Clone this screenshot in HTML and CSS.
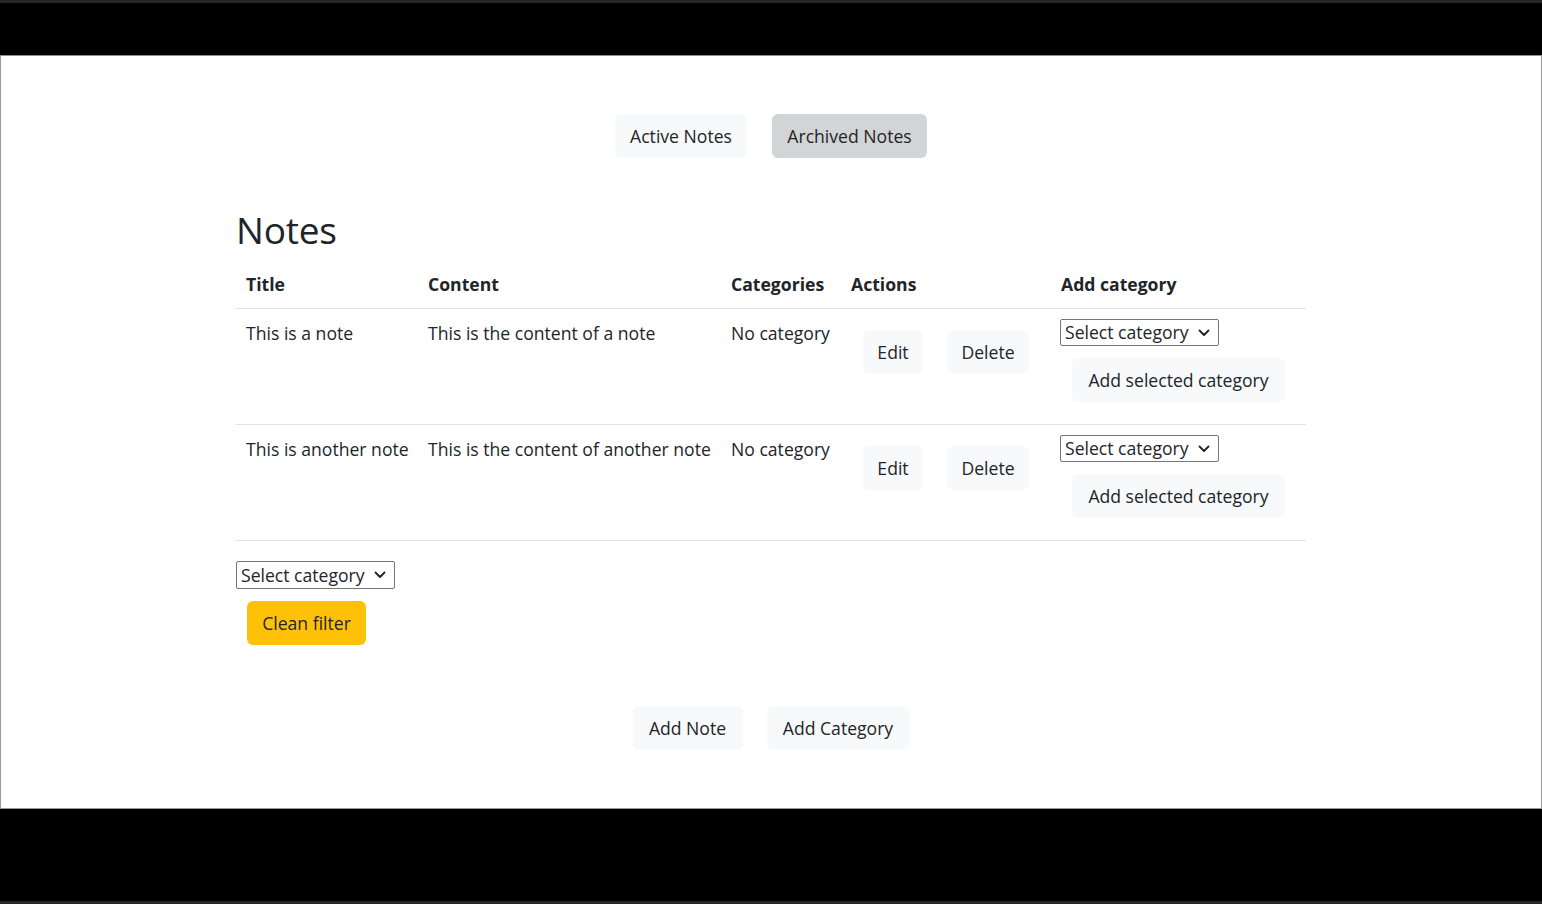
FILE: index.html
```html
<!DOCTYPE html>
<html lang="en">
<head>
<meta charset="utf-8">
<title>Notes</title>
<link rel="stylesheet" href="styles.css">
</head>
<body>
<div class="strip"></div>
<div class="bar-top"></div>
<div class="frame">
  <nav class="tabs">
    <button class="btn btn-light">Active Notes</button>
    <button class="btn btn-pressed">Archived Notes</button>
  </nav>
  <main class="container">
    <h2 class="title">Notes</h2>
    <table class="notes">
      <colgroup>
        <col class="c-title"><col class="c-content"><col class="c-cat"><col class="c-actions"><col class="c-add">
      </colgroup>
      <thead>
        <tr><th>Title</th><th>Content</th><th>Categories</th><th>Actions</th><th>Add category</th></tr>
      </thead>
      <tbody>
        <tr>
          <td>This is a note</td>
          <td>This is the content of a note</td>
          <td>No category</td>
          <td class="actions"><button class="btn btn-light btn-edit">Edit</button><button class="btn btn-light btn-del">Delete</button></td>
          <td class="add">
            <div class="select"><span>Select category</span><svg class="chev" viewBox="0 0 12 8" width="12" height="8"><path d="M1.5 1.5 6 6l4.5-4.5" fill="none" stroke="#222" stroke-width="1.8" stroke-linecap="round" stroke-linejoin="round"/></svg></div>
            <button class="btn btn-light btn-addsel">Add selected category</button>
          </td>
        </tr>
        <tr>
          <td>This is another note</td>
          <td>This is the content of another note</td>
          <td>No category</td>
          <td class="actions"><button class="btn btn-light btn-edit">Edit</button><button class="btn btn-light btn-del">Delete</button></td>
          <td class="add">
            <div class="select"><span>Select category</span><svg class="chev" viewBox="0 0 12 8" width="12" height="8"><path d="M1.5 1.5 6 6l4.5-4.5" fill="none" stroke="#222" stroke-width="1.8" stroke-linecap="round" stroke-linejoin="round"/></svg></div>
            <button class="btn btn-light btn-addsel">Add selected category</button>
          </td>
        </tr>
      </tbody>
    </table>
    <div class="filter">
      <div class="select select-lg"><span>Select category</span><svg class="chev" viewBox="0 0 12 8" width="12" height="8"><path d="M1.5 1.5 6 6l4.5-4.5" fill="none" stroke="#222" stroke-width="1.8" stroke-linecap="round" stroke-linejoin="round"/></svg></div>
      <button class="btn btn-warning">Clean filter</button>
    </div>
    <div class="bottom">
      <button class="btn btn-light">Add Note</button>
      <button class="btn btn-light">Add Category</button>
    </div>
  </main>
</div>
<div class="bar-bottom"></div>
<div class="strip"></div>
</body>
</html>
```
FILE: styles.css
```css
* { box-sizing: border-box; }
html, body { margin: 0; padding: 0; }
body {
  background: #000;
  font-family: "Open Sans", "Noto Sans", sans-serif;
  font-size: 17.6px;
  color: #212529;
  height: 904px;
  overflow: hidden;
}
.strip { height: 3px; background: #262626; }
.bar-top { height: 52px; }
.bar-bottom { height: 92px; }
.frame {
  height: 754px;
  background: #fff;
  border: 1px solid #9a9a9a;
  border-top-color: #8c8c8c;
  padding-top: 58px;
  overflow: hidden;
}
.btn {
  font: inherit;
  color: #212529;
  border: 0;
  border-radius: 6px;
  height: 44px;
  padding: 0 12px;
  line-height: 44px;
  cursor: pointer;
  white-space: nowrap;
}
.btn-light { background: #f8f9fa; }
.btn-pressed { background: #d3d4d5; }
.btn-warning { background: #ffc107; }
.tabs {
  display: flex;
  justify-content: center;
  gap: 25px;
}
.tabs .btn:first-child { width: 132px; }
.tabs .btn:last-child { width: 155px; }
.container {
  width: 1070px;
  margin: 0 auto;
}
.title {
  font-size: 37px;
  font-weight: 500;
  margin: 48px 0 0 0;
  line-height: 48px;
  letter-spacing: -0.2px;
}
.notes {
  width: 1070px;
  border-collapse: collapse;
  table-layout: fixed;
  margin-top: 6px;
}
.c-title { width: 182px; }
.c-content { width: 303px; }
.c-cat { width: 120px; }
.c-actions { width: 210px; }
.c-add { width: 255px; }
.notes th, .notes td {
  text-align: left;
  vertical-align: top;
  padding: 10px 9px 10px 10px;
  line-height: 28px;
  white-space: nowrap;
  overflow: visible;
}
.notes th { font-weight: 700; border-bottom: 1px solid #dee2e6; }
.notes td { border-bottom: 1px solid #dee2e6; }
.notes tbody tr td { height: 116px; }
.notes td.actions { padding-top: 10px; }
.notes td.add { padding-top: 9px; padding-left: 9px; }
.actions .btn { margin: 11px 12px 0; }
.btn-edit { width: 60px; }
.btn-del { width: 82px; }
.select {
  display: flex;
  align-items: center;
  justify-content: space-between;
  width: 159px;
  height: 27px;
  border: 1px solid #767676;
  border-radius: 2px;
  padding: 0 8px 0 4px;
  line-height: 25px;
  background: #fff;
  margin-top: 1px;
}
.select-lg { height: 28px; }
.chev { flex: none; }
.btn-addsel { display: block; width: 213px; margin: 12px 0 0 12px; }
.filter { margin-top: 20px; }
.filter .btn { display: block; margin: 12px 0 0 11px; width: 119px; }
.bottom {
  display: flex;
  justify-content: center;
  gap: 24px;
  margin-top: 61px;
}
.bottom .btn:first-child { width: 110px; }
.bottom .btn:last-child { width: 143px; }
```
